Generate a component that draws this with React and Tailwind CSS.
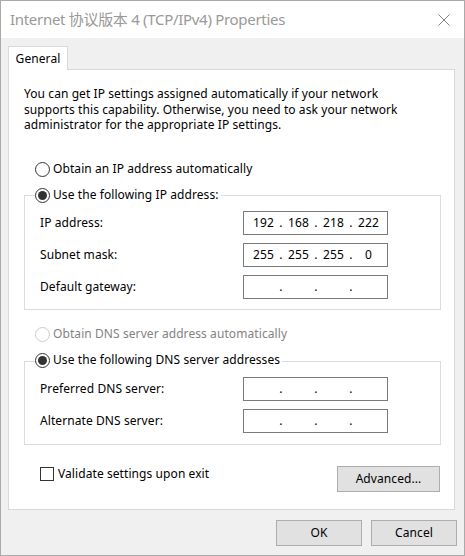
import React from "react";

function Radio({ checked, disabled }) {
  return (
    <span
      className={
        disabled
          ? "w-[15px] h-[15px] shrink-0 rounded-full border border-[#cccccc] bg-white"
          : "w-[15px] h-[15px] shrink-0 rounded-full border border-[#333333] bg-white flex items-center justify-center"
      }
    >
      {checked && <span className="w-[9px] h-[9px] rounded-full bg-[#333333]" />}
    </span>
  );
}

function IpField({ parts }) {
  return (
    <div className="w-[145px] h-[24px] shrink-0 border border-[#7a7a7a] bg-white flex items-center pl-[3px] text-black">
      {[0, 1, 2, 3].map((i) => (
        <React.Fragment key={i}>
          <span className="w-[33px] text-center">{parts ? parts[i] : ""}</span>
          {i < 3 && <span className="w-[2px] flex justify-center">.</span>}
        </React.Fragment>
      ))}
    </div>
  );
}

function FieldRow({ label, parts }) {
  return (
    <div className="flex items-center h-[24px]">
      <span className="w-[203px] shrink-0">{label}</span>
      <IpField parts={parts} />
    </div>
  );
}

export default function App() {
  return (
    <div className="w-[465px] h-[556px] border border-[#aaaaaa] bg-[#f0f0f0] flex flex-col font-['Noto_Sans','Noto_Sans_CJK_SC',sans-serif] text-[12px] tracking-[0.08px] text-black overflow-hidden">
      {/* Title bar */}
      <div className="h-[37px] bg-white flex items-center justify-between pl-[9px] pr-[14px] shrink-0">
        <span className="text-[15px] tracking-[-0.3px] text-[#999999]">
          Internet 协议版本 4 (TCP/IPv4) Properties
        </span>
        <svg width="12" height="12" viewBox="0 0 12 12" className="block">
          <path d="M0.5 0.5 L11.5 11.5 M11.5 0.5 L0.5 11.5" stroke="#808080" strokeWidth="1" fill="none" />
        </svg>
      </div>

      {/* Body */}
      <div className="flex flex-col pl-[7px] pr-[9px] pt-[8px]">
        <div className="flex">
          <div className="relative z-10 w-[60px] h-[24px] bg-white border border-b-0 border-[#d9d9d9] flex items-center justify-center">
            General
          </div>
        </div>
        <div className="-mt-px border border-[#d9d9d9] bg-white flex flex-col pt-[16px] pb-[17px]">
          <p className="pl-[15px] leading-[15.5px]">
            You can get IP settings assigned automatically if your network
            <br />
            supports this capability. Otherwise, you need to ask your network
            <br />
            administrator for the appropriate IP settings.
          </p>

          <div className="mt-[28.5px] ml-[26px] h-[16px] flex items-center gap-[3px]">
            <Radio />
            <span>Obtain an IP address automatically</span>
          </div>

          <div className="relative z-10 mt-[10px] ml-[26px] h-[16px] w-fit bg-white pr-[2px] flex items-center gap-[3px]">
            <Radio checked />
            <span>Use the following IP address:</span>
          </div>
          <div className="-mt-[8px] ml-[15px] mr-[13px] border border-[#dcdcdc] pl-[15px] pt-[15px] pb-[10px] flex flex-col gap-[8px]">
            <FieldRow label="IP address:" parts={["192", "168", "218", "222"]} />
            <FieldRow label="Subnet mask:" parts={["255", "255", "255", "0"]} />
            <FieldRow label="Default gateway:" />
          </div>

          <div className="mt-[16px] ml-[26px] h-[16px] flex items-center gap-[3px] text-[#838383]">
            <Radio disabled />
            <span>Obtain DNS server address automatically</span>
          </div>

          <div className="relative z-10 mt-[10px] ml-[26px] h-[16px] w-fit bg-white pr-[2px] flex items-center gap-[3px]">
            <Radio checked />
            <span>Use the following DNS server addresses</span>
          </div>
          <div className="-mt-[7px] ml-[15px] mr-[13px] border border-[#dcdcdc] pl-[15px] pt-[15px] pb-[11px] flex flex-col gap-[8px]">
            <FieldRow label="Preferred DNS server:" />
            <FieldRow label="Alternate DNS server:" />
          </div>

          <div className="mt-[21px] ml-[31px] mr-[14px] flex items-start justify-between">
            <div className="flex items-center gap-[4px] h-[16px]">
              <span className="w-[14px] h-[14px] shrink-0 border border-[#333333] bg-white" />
              <span>Validate settings upon exit</span>
            </div>
            <button className="w-[103px] h-[26px] shrink-0 bg-[#e1e1e1] border border-[#adadad] flex items-center justify-center">
              Advanced...
            </button>
          </div>
        </div>
      </div>

      {/* Footer */}
      <div className="flex justify-end gap-[9px] pr-[7px] pt-[10px]">
        <button className="w-[86px] h-[26px] bg-[#e1e1e1] border border-[#adadad] flex items-center justify-center">
          OK
        </button>
        <button className="w-[86px] h-[26px] bg-[#e1e1e1] border border-[#adadad] flex items-center justify-center">
          Cancel
        </button>
      </div>
    </div>
  );
}
